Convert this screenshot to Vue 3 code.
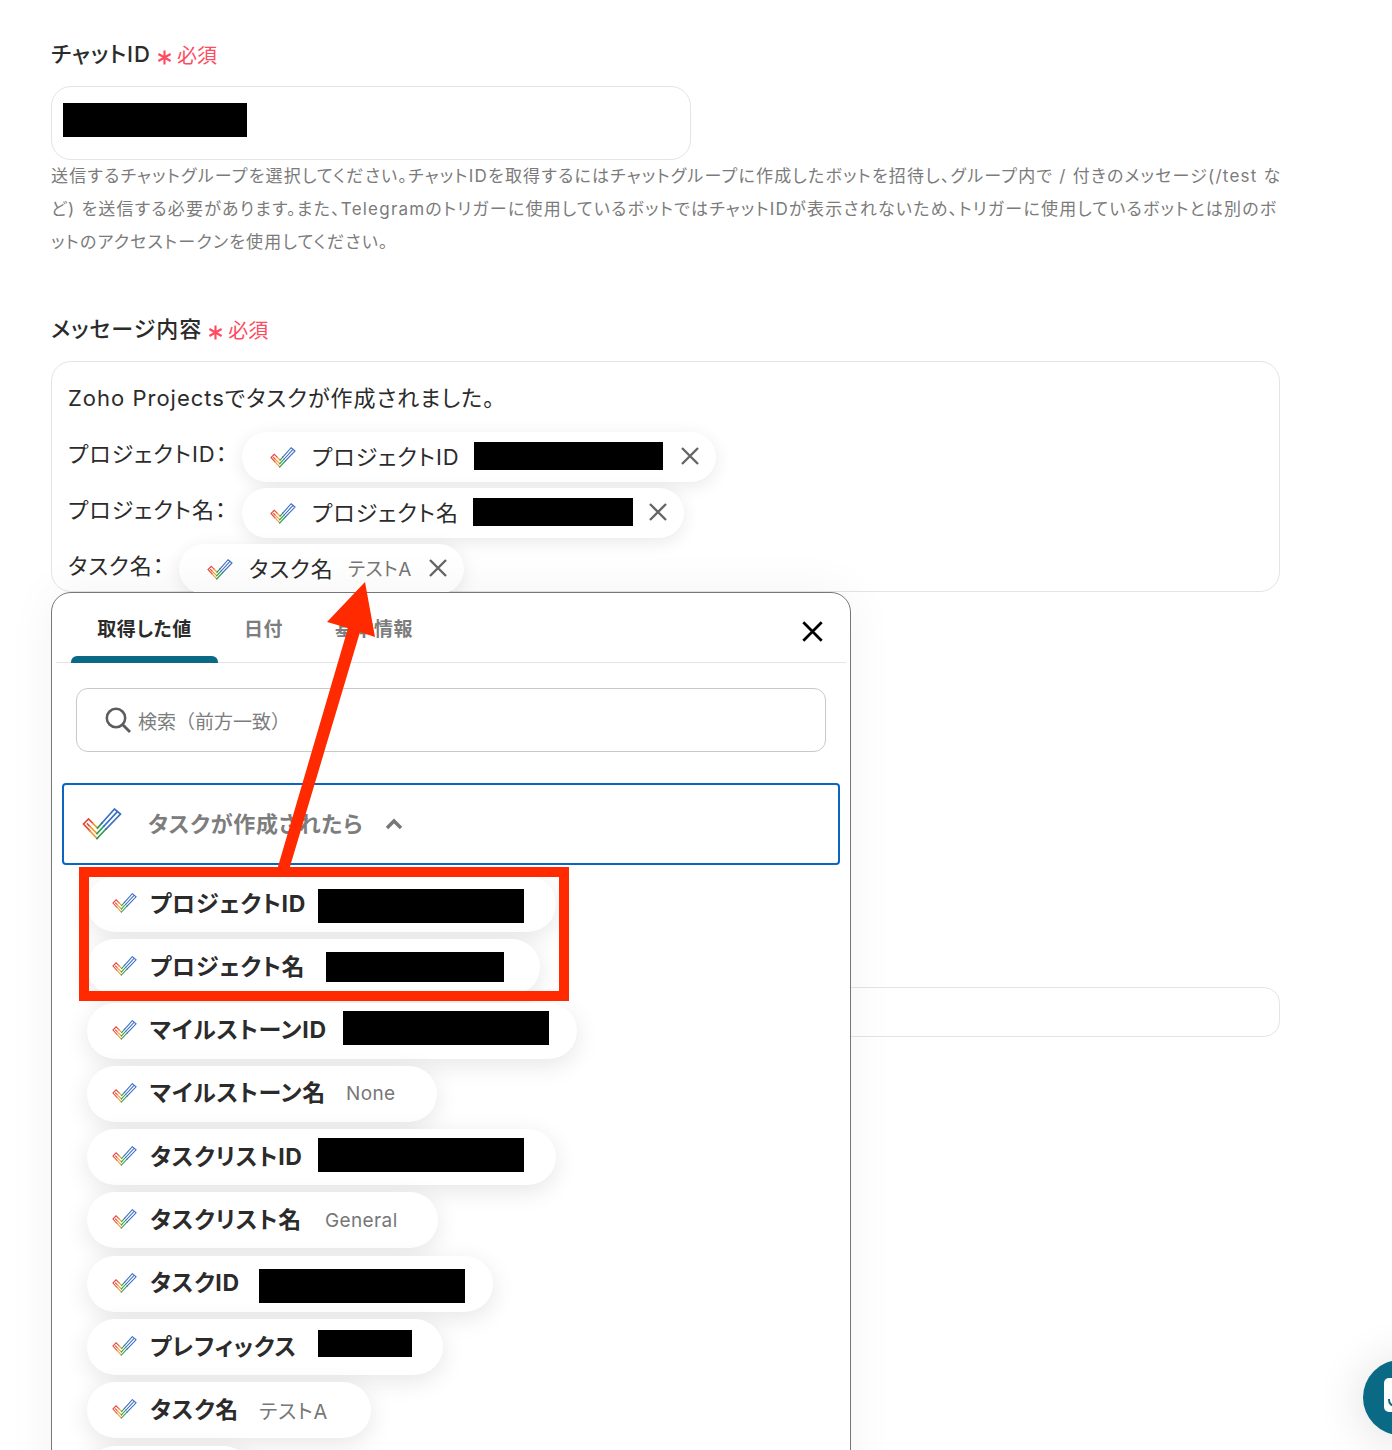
<script setup>
const items = [
  { name: 'プロジェクトID', width: 469, bar: 206, gap: 12, shift: 2, h: 34 },
  { name: 'プロジェクト名', width: 453, bar: 178, gap: 21, shift: 0, h: 30 },
  { name: 'マイルストーンID', width: 490, bar: 206, gap: 16, shift: -3, h: 34 },
  { name: 'マイルストーン名', width: 350, value: 'None', gap: 20 },
  { name: 'タスクリストID', width: 469, bar: 206, gap: 15, shift: -2, h: 34 },
  { name: 'タスクリスト名', width: 351, value: 'General', gap: 23 },
  { name: 'タスクID', width: 406, bar: 206, gap: 19, shift: 2, h: 34 },
  { name: 'プレフィックス', width: 356, bar: 94, gap: 21, shift: -4, h: 27 },
  { name: 'タスク名', width: 284, value: 'テストA', gap: 20, wide: true },
  { name: '', width: 165 },
]
const rows = [
  { label: 'プロジェクトID：', name: 'プロジェクトID', bar: 189, pill: 474, gap: 14, labelWidth: 174 },
  { label: 'プロジェクト名：', name: 'プロジェクト名', bar: 160, pill: 442, gap: 14, labelWidth: 174 },
  { label: 'タスク名：', name: 'タスク名', value: 'テストA', pill: 285, gap: 14, labelWidth: 111 },
]
</script>

<template>
  <div class="page">
    <svg class="defs" width="0" height="0" aria-hidden="true">
      <symbol id="zoho" viewBox="0 0 40 32">
        <g fill="none" stroke-width="1.7" stroke-linecap="square">
          <path stroke="#e8453c" d="M8 23 L1.5 16 L6.5 11 L11 15.5 M5.5 16 L8 18.5" />
          <path stroke="#f29a2e" d="M8 23 L15 30.5 M8 18.5 L15 25.5 M11 15.5 L15.5 20" />
          <path stroke="#2f9a52" d="M15 30.5 L24 21 M15 25.5 L22 18 M15.5 20 L20 15" />
          <path stroke="#3d6fc4" d="M24 21 L38.5 6 L32.5 1 L20 15 M22 18 L35.5 3.5" />
        </g>
      </symbol>
      <symbol id="star" viewBox="0 0 14 14">
        <path d="M7 .5V13.5M1.3 3.7L12.7 10.3M12.7 3.7L1.3 10.3" stroke="#ff4b60" stroke-width="2" fill="none" />
      </symbol>
      <symbol id="cross" viewBox="0 0 20 20">
        <path d="M2 2L18 18M18 2L2 18" stroke="currentColor" stroke-width="2.4" fill="none" />
      </symbol>
    </svg>

    <section class="field first">
      <div class="label">
        チャットID
        <svg class="star"><use href="#star" /></svg>
        <span class="req">必須</span>
      </div>
      <div class="input">
        <span class="redact chat-redact"></span>
      </div>
      <p class="help">
        送信するチャットグループを選択してください。チャットIDを取得するにはチャットグループに作成したボットを招待し、グループ内で / 付きのメッセージ(/test など) を送信する必要があります。また、Telegramのトリガーに使用しているボットではチャットIDが表示されないため、トリガーに使用しているボットとは別のボットのアクセストークンを使用してください。
      </p>
    </section>

    <section class="field second">
      <div class="label">
        メッセージ内容
        <svg class="star"><use href="#star" /></svg>
        <span class="req">必須</span>
      </div>
      <div class="message">
        <div class="msg-title">Zoho Projectsでタスクが作成されました。</div>
        <div v-for="row in rows" :key="row.label" class="msg-row">
          <span class="msg-label" :style="{ width: row.labelWidth + 'px' }">{{ row.label }}</span>
          <span class="chip" :style="{ width: row.pill + 'px' }">
            <svg class="chip-icon"><use href="#zoho" /></svg>
            <span class="chip-name">{{ row.name }}</span>
            <span v-if="row.value" class="chip-value" :style="{ marginLeft: row.gap + 'px' }">{{ row.value }}</span>
            <span v-else class="redact chip-redact" :style="{ width: row.bar + 'px', marginLeft: row.gap + 'px' }"></span>
            <svg class="chip-x"><use href="#cross" /></svg>
          </span>
        </div>
      </div>
    </section>

    <div class="under-input"></div>

    <aside class="panel">
      <div class="tabs">
        <span class="tab active">取得した値</span>
        <span class="tab date">日付</span>
        <span class="tab info">基本情報</span>
        <svg class="close"><use href="#cross" /></svg>
      </div>
      <div class="search">
        <svg class="search-icon" viewBox="0 0 26 26">
          <circle cx="11" cy="11" r="9.2" fill="none" stroke="#5c5c5c" stroke-width="2.5" />
          <path d="M18 18L25 25" stroke="#5c5c5c" stroke-width="2.8" />
        </svg>
        <span>検索（前方一致）</span>
      </div>
      <div class="group">
        <svg class="group-icon"><use href="#zoho" /></svg>
        <span class="group-title">タスクが作成されたら</span>
        <svg class="chevron" viewBox="0 0 18 12">
          <path d="M2 10L9 3L16 10" fill="none" stroke="#777" stroke-width="3.4" />
        </svg>
      </div>
      <ul class="list">
        <li v-for="(item, i) in items" :key="i" class="pill" :style="{ width: item.width + 'px' }">
          <svg class="pill-icon"><use href="#zoho" /></svg>
          <span class="pill-name">{{ item.name }}</span>
          <span
            v-if="item.value"
            class="pill-value"
            :class="{ wide: item.wide }"
            :style="{ marginLeft: item.gap + 'px' }"
          >{{ item.value }}</span>
          <span
            v-else-if="item.bar"
            class="redact"
            :style="{ width: item.bar + 'px', height: item.h + 'px', marginLeft: item.gap + 'px', marginTop: item.shift * 2 + 'px' }"
          ></span>
        </li>
      </ul>
    </aside>

    <div class="highlight"></div>
    <svg class="arrow" viewBox="0 0 1392 1450">
      <path fill="#ff2a00" d="M277 870 L348 628 L327 622 L365 582 L375 637 L360 632 L289 870 Z" />
    </svg>

    <div class="chat-bubble"><span class="chat-glyph"></span></div>
  </div>
</template>

<style>
html, body { margin: 0; background: #fff; }
</style>

<style scoped>
* { box-sizing: border-box; }
.page {
  position: relative;
  height: 1450px;
  overflow: hidden;
  padding-left: 51px;
  background: #fff;
  color: #2b2b2b;
  font-family: "Inter", "Noto Sans CJK JP", sans-serif;
  font-feature-settings: "palt";
}
.defs { position: absolute; }
.field { width: 1229px; }
.first { padding-top: 40px; }
.second { padding-top: 56px; }
.label {
  display: flex;
  align-items: center;
  height: 29px;
  font-size: 22px;
  font-weight: 500;
  letter-spacing: 1px;
  line-height: 29px;
}
.star { width: 15px; height: 15px; margin: 5px 5px 0 6px; }
.req { margin-top: 3px; color: #ff4b60; font-size: 20px; font-weight: 400; letter-spacing: 0; }
.input {
  width: 640px;
  height: 74px;
  margin-top: 17px;
  padding: 16px 11px;
  border: 1px solid #e3e3ea;
  border-radius: 20px;
}
.redact { display: block; flex: none; height: 34px; background: #000; }
.chat-redact { width: 184px; }
.help {
  width: 1234px;
  margin: 0;
  font-size: 17px;
  line-height: 33px;
  letter-spacing: 1.22px;
  color: #7b7b7b;
}
.message {
  width: 1229px;
  height: 231px;
  margin-top: 17px;
  padding: 16px 16px 0;
  border: 1px solid #e3e3ea;
  border-radius: 20px;
}
.msg-title { height: 54px; font-size: 22px; line-height: 40px; letter-spacing: 1px; }
.msg-row { display: flex; height: 56px; }
.msg-label { flex: none; font-size: 22px; line-height: 44px; letter-spacing: 1px; white-space: nowrap; }
.chip {
  display: flex;
  align-items: center;
  position: relative;
  height: 50px;
  padding-left: 28px;
  background: #fff;
  border-radius: 25px;
  box-shadow: 0 4px 18px rgba(0, 0, 0, .09);
}
.chip-icon { width: 26px; height: 21px; flex: none; }
.chip-name { margin-left: 16px; padding-bottom: 4px; font-size: 22px; letter-spacing: 1px; white-space: nowrap; }
.chip-value { padding-bottom: 4px; font-size: 19px; letter-spacing: .5px; color: #777; white-space: nowrap; }
.chip-redact { height: 28px; margin-top: -3px; }
.chip-x { position: absolute; right: 16px; top: 14px; width: 20px; height: 20px; color: #666; }
.under-input {
  width: 1229px;
  height: 50px;
  margin-top: 395px;
  border: 1px solid #e3e3ea;
  border-radius: 16px;
}
.panel {
  position: absolute;
  left: 51px;
  top: 592px;
  width: 800px;
  height: 900px;
  padding: 0 4px;
  background: #fff;
  border: 1px solid #777;
  border-radius: 20px;
  box-shadow: 0 0 50px rgba(0, 0, 0, .05);
}
.tabs {
  position: relative;
  display: flex;
  align-items: center;
  height: 70px;
  border-bottom: 1px solid #e5e5e5;
  font-size: 19px;
  letter-spacing: .5px;
  font-weight: 700;
  color: #7d7d7d;
}
.tab { white-space: nowrap; }
.active {
  position: relative;
  display: flex;
  justify-content: center;
  align-items: center;
  width: 147px;
  height: 70px;
  margin-left: 15px;
  color: #2b2b2b;
}
.active::after {
  content: "";
  position: absolute;
  left: 0;
  right: 0;
  bottom: 0;
  height: 7px;
  border-radius: 6px 6px 0 0;
  background: #0a6a85;
}
.date { margin-left: 26px; }
.info { margin-left: 52px; }
.close { position: absolute; right: 22px; top: 27px; width: 23px; height: 23px; color: #000; }
.search {
  display: flex;
  align-items: center;
  height: 64px;
  margin: 25px 20px 0;
  padding-left: 28px;
  border: 1px solid #c9c9c9;
  border-radius: 12px;
  font-size: 19px;
  font-weight: 400;
  font-feature-settings: normal;
  color: #7d7d7d;
}
.search-icon { width: 26px; height: 26px; margin-right: 7px; }
.group {
  display: flex;
  align-items: center;
  height: 82px;
  margin: 31px 6px 0;
  padding-left: 18px;
  border: 2px solid #0b66c3;
  border-radius: 4px;
}
.group-icon { width: 40px; height: 32px; margin-top: -1px; }
.group-title { margin-left: 26px; padding-bottom: 4px; font-size: 22px; letter-spacing: .7px; font-weight: 700; color: #7d7d7d; }
.chevron { width: 18px; height: 12px; margin-left: 22px; }
.list {
  list-style: none;
  margin: 11px 0 0 31px;
  padding: 0;
  display: flex;
  flex-direction: column;
  gap: 7.3px;
}
.pill {
  display: flex;
  align-items: center;
  height: 56px;
  padding-left: 25px;
  background: #fff;
  border-radius: 28px;
  box-shadow: 0 6px 24px rgba(0, 0, 0, .1);
}
.pill-icon { width: 25px; height: 20px; flex: none; margin-top: -2px; }
.pill-name { margin-left: 13px; padding-bottom: 5px; font-size: 23px; letter-spacing: .7px; font-weight: 700; white-space: nowrap; }
.pill-value { font-size: 19px; letter-spacing: .4px; color: #777; white-space: nowrap; }
.pill-value.wide { font-size: 20px; letter-spacing: 1px; }
.highlight {
  position: absolute;
  left: 79px;
  top: 867px;
  width: 490px;
  height: 134px;
  border: 10px solid #ff2a00;
}
.arrow { position: absolute; left: 0; top: 0; width: 1392px; height: 1450px; pointer-events: none; }
.chat-bubble {
  position: absolute;
  left: 1363px;
  top: 1360px;
  width: 75px;
  height: 75px;
  border-radius: 50%;
  background: #0a6a85;
  box-shadow: 0 4px 50px rgba(0, 0, 0, .14);
}
.chat-glyph {
  position: absolute;
  left: 21px;
  top: 18px;
  width: 34px;
  height: 34px;
  background: #fff;
  border-radius: 5px;
}
.chat-glyph::after {
  content: "";
  position: absolute;
  left: 4px;
  top: 21px;
  width: 14px;
  height: 6px;
  border: 2px solid #0a6a85;
  border-top: none;
  border-radius: 0 0 7px 7px;
}
</style>
